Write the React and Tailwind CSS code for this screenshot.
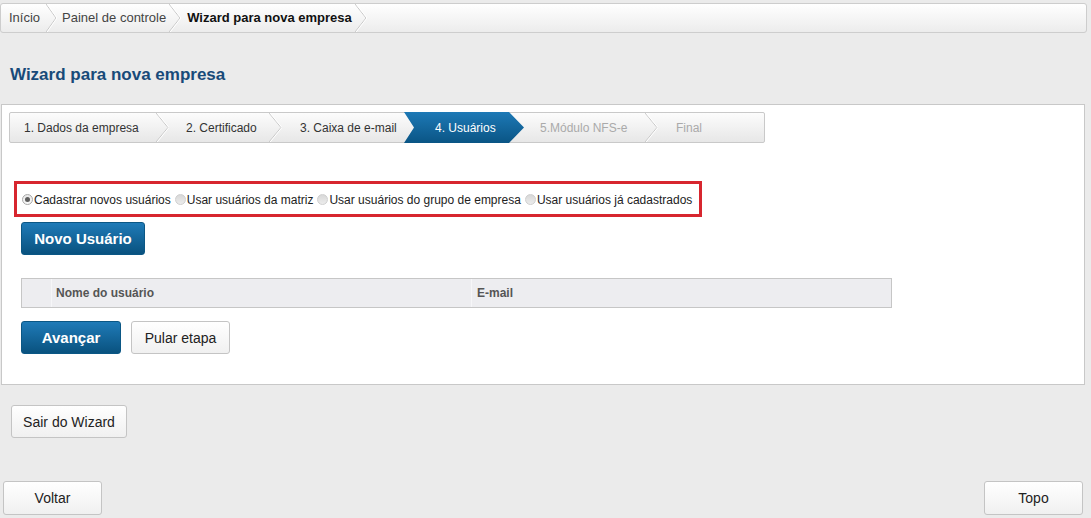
import React from "react";

function Chevron({ h = 31, w = 13 }) {
  return (
    <svg width={w} height={h} viewBox={`0 0 ${w} ${h}`} className="shrink-0 block">
      <polyline points={`0,0 ${w - 1},${h / 2} 0,${h}`} fill="none" stroke="#c9c9c9" strokeWidth="1" />
      <polyline points={`1.2,0 ${w},${h / 2} 1.2,${h}`} fill="none" stroke="#ffffff" strokeWidth="1" />
    </svg>
  );
}

function Radio({ checked, label, last }) {
  return (
    <label className={`flex items-center shrink-0 whitespace-nowrap ${last ? "" : "mr-[4px]"}`}>
      {checked ? (
        <span className="shrink-0 w-[11px] h-[11px] rounded-full border border-[#a9a9a9] bg-gradient-to-b from-[#e6e6e6] to-[#fafafa] flex items-center justify-center">
          <span className="w-[5px] h-[5px] rounded-full bg-[#5d5d5d]" />
        </span>
      ) : (
        <span className="shrink-0 w-[11px] h-[11px] rounded-full border border-[#cfcfcf] bg-gradient-to-b from-[#d8d8d8] to-[#ececec]" />
      )}
      <span className="ml-[1px] text-[12px] text-[#222] whitespace-nowrap">{label}</span>
    </label>
  );
}

function LightButton({ children, className = "" }) {
  return (
    <button className={`rounded-[3px] border border-[#c4c4c4] bg-gradient-to-b from-[#ffffff] to-[#f0f0f0] text-[14px] text-[#222] flex items-center justify-center pt-px ${className}`}>
      {children}
    </button>
  );
}

function BlueButton({ children, className = "" }) {
  return (
    <button className={`rounded-[3px] bg-gradient-to-b from-[#1f7bb8] to-[#09527f] border border-[#0b5785] text-[15px] font-bold text-white flex items-center justify-center pt-px ${className}`}>
      {children}
    </button>
  );
}

export default function App() {
  return (
    <div className="min-h-[518px] w-[1091px] bg-[#ebebeb] pt-[3px] font-['Liberation_Sans',Arial,sans-serif] overflow-hidden">
      {/* Breadcrumb */}
      <div className="mr-[4px] h-[30px] rounded-[3px] border border-[#cdcdcd] bg-gradient-to-b from-[#ffffff] to-[#ececec] flex items-center text-[13px]">
        <span className="pl-[8px] pr-[6px] text-[#444]">Início</span>
        <Chevron h={28} w={11} />
        <span className="pl-[5px] pr-[3px] text-[#444]">Painel de controle</span>
        <Chevron h={28} w={12} />
        <span className="pl-[6px] pr-[3px] font-bold text-[#111]">Wizard para nova empresa</span>
        <Chevron h={28} w={12} />
      </div>

      {/* Title */}
      <h1 className="mt-[32px] ml-[10px] h-[20px] leading-[20px] text-[17px] font-bold text-[#184a79]">
        Wizard para nova empresa
      </h1>

      {/* Panel */}
      <div className="mt-[19px] ml-[1px] mr-[6px] border border-[#c8c8c8] bg-white pt-[7px] pl-[7px] pb-[30px]">
        {/* Steps */}
        <div className="w-[756px] h-[31px] rounded-[2px] border border-[#c9c9c9] bg-gradient-to-b from-[#fcfcfc] to-[#e7e7e7] flex items-center text-[12px]">
          <div className="w-[146px] pl-[14px] text-[#333]">1. Dados da empresa</div>
          <Chevron h={29} w={13} />
          <div className="w-[100px] pl-[17px] text-[#333]">2. Certificado</div>
          <Chevron h={29} w={13} />
          <div className="w-[122px] pl-[18px] text-[#333]">3. Caixa de e-mail</div>
          <div className="w-[120px] h-[31px] -my-px pl-[31px] flex items-center bg-gradient-to-b from-[#1d79b6] to-[#0a5585] text-white [clip-path:polygon(0_0,calc(100%_-_15px)_0,100%_50%,calc(100%_-_15px)_100%,0_100%,10px_50%)]">
            4. Usuários
          </div>
          <div className="w-[121px] pl-[16px] text-[#aaa]">5.Módulo NFS-e</div>
          <Chevron h={29} w={13} />
          <div className="flex-1 pl-[18px] text-[#aaa]">Final</div>
        </div>

        {/* Radio options */}
        <div className="mt-[38px] ml-[5px] w-[688px] h-[36px] border-[3px] border-[#d7262f] flex items-center pl-[5px] pt-px">
          <Radio checked label="Cadastrar novos usuários" />
          <Radio label="Usar usuários da matriz" />
          <Radio label="Usar usuários do grupo de empresa" />
          <Radio label="Usar usuários já cadastrados" last />
        </div>

        <BlueButton className="mt-[5px] ml-[12px] w-[124px] h-[33px]">Novo Usuário</BlueButton>

        {/* Table header */}
        <div className="mt-[23px] ml-[12px] w-[871px] h-[30px] border border-[#c6c6c6] bg-[#ededf0] flex text-[12px] font-bold text-[#555]">
          <div className="w-[30px] border-r border-[#f6f6f8]" />
          <div className="w-[420px] pl-[4px] flex items-center border-r border-[#f6f6f8]">Nome do usuário</div>
          <div className="flex-1 pl-[5px] flex items-center">E-mail</div>
        </div>

        {/* Actions */}
        <div className="mt-[13px] ml-[12px] flex">
          <BlueButton className="w-[100px] h-[33px]">Avançar</BlueButton>
          <LightButton className="ml-[10px] w-[99px] h-[33px]">Pular etapa</LightButton>
        </div>
      </div>

      <LightButton className="mt-[20px] ml-[11px] w-[116px] h-[33px]">Sair do Wizard</LightButton>

      <div className="mt-[43px] flex justify-between">
        <LightButton className="ml-[3px] w-[99px] h-[34px]">Voltar</LightButton>
        <LightButton className="mr-[8px] w-[99px] h-[34px]">Topo</LightButton>
      </div>
    </div>
  );
}
